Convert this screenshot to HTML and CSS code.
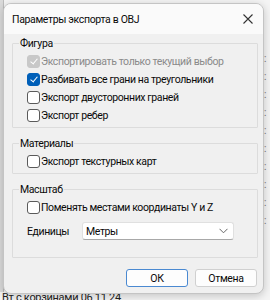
FILE: index.html
```html
<!DOCTYPE html>
<html lang="ru">
<head>
    <meta charset="UTF-8">
    <meta name="viewport" content="width=device-width, initial-scale=1.0">
    <title>Параметры экспорта в OBJ</title>
    <link rel="stylesheet" href="styles.css">
</head>

<body>
    <div class="desktop">
        <div class="back-left"></div>
        <div class="back-right">
            <span>:</span><span>:</span><span>:</span><span>:</span><span>:</span><span>:</span><span>:</span><span>:</span><span>:</span><span>:</span>
        </div>
        <div class="back-bottom">Вт с корзинами 06 11 24</div>
    </div>

    <div class="dialog">
        <div class="title-bar">
            <span class="title">Параметры экспорта в OBJ</span>
            <svg class="close" width="10" height="10" viewBox="0 0 10 10">
                <path d="M0.5 0.5 L9.5 9.5 M9.5 0.5 L0.5 9.5" stroke="#333" stroke-width="1.1" fill="none"/>
            </svg>
        </div>

        <div class="dialog-body">
            <fieldset class="group">
                <legend>Фигура</legend>
                <label class="check disabled"><span class="box on"></span>Экспортировать только текущий выбор</label>
                <label class="check"><span class="box on"></span>Разбивать все грани на треугольники</label>
                <label class="check"><span class="box"></span>Экспорт двусторонних граней</label>
                <label class="check"><span class="box"></span>Экспорт ребер</label>
            </fieldset>

            <fieldset class="group">
                <legend>Материалы</legend>
                <label class="check"><span class="box"></span>Экспорт текстурных карт</label>
            </fieldset>

            <fieldset class="group scale">
                <legend>Масштаб</legend>
                <label class="check"><span class="box"></span>Поменять местами координаты Y и Z</label>
                <div class="units">
                    <span class="units-label">Единицы</span>
                    <div class="select">
                        <span>Метры</span>
                        <svg width="9" height="6" viewBox="0 0 9 6">
                            <path d="M0.5 0.8 L4.5 4.8 L8.5 0.8" stroke="#666" stroke-width="1" fill="none"/>
                        </svg>
                    </div>
                </div>
            </fieldset>

            <div class="buttons">
                <button class="button default">ОК</button>
                <button class="button">Отмена</button>
            </div>
        </div>
    </div>
</body>
</html>
```

FILE: styles.css
```css
body {
    font-family: Roboto, "Liberation Sans", sans-serif;
    font-size: 10.5px;
    letter-spacing: -0.4px;
    color: #0a0a0a;
    background-color: #f4f4f4;
    margin: 0;
    padding: 0;
    width: 270px;
    height: 300px;
    overflow: hidden;
    position: relative;
}

.desktop {
    position: absolute;
    inset: 0;
}

.back-left {
    position: absolute;
    left: 0;
    top: 0;
    width: 3px;
    height: 292px;
    background: #dadada;
    border-right: 1px solid #bdbdbd;
}

.back-right {
    position: absolute;
    right: 0;
    top: 52px;
    width: 6px;
    display: flex;
    flex-direction: column;
    gap: 5px;
    color: #777;
    font-size: 10px;
    line-height: 13px;
}

.back-bottom {
    position: absolute;
    left: 2px;
    top: 291px;
    font-size: 11px;
    letter-spacing: -0.3px;
    color: #222;
    white-space: nowrap;
}

.dialog {
    position: absolute;
    left: 3px;
    top: 3px;
    width: 259px;
    height: 289px;
    background: #f0f0f0;
    border: 1px solid #c4c4c4;
    border-radius: 8px;
    box-shadow: 0 2px 8px rgba(0, 0, 0, 0.2);
    overflow: hidden;
    display: flex;
    flex-direction: column;
}

.title-bar {
    height: 30px;
    background: #fafafa;
    display: flex;
    align-items: center;
    justify-content: space-between;
    padding: 0 10px 0 8px;
    flex-shrink: 0;
}

.title {
    letter-spacing: -0.35px;
}

.dialog-body {
    padding: 2px 5px 0 8px;
    display: flex;
    flex-direction: column;
    gap: 8px;
}

.group {
    margin: 0;
    border: 1px solid #dcdcdc;
    border-radius: 1px;
    padding: 4px 6px 5px 14px;
    display: flex;
    flex-direction: column;
    gap: 5px;
}

.group legend {
    padding: 0 1px;
    margin-left: -8px;
    line-height: 15px;
}

.check {
    display: flex;
    align-items: center;
    height: 13px;
    white-space: nowrap;
}

.check.disabled {
    color: #8a8a8a;
}

.box {
    width: 11px;
    height: 11px;
    border: 1px solid #5a5a5a;
    border-radius: 3px;
    background: #ffffff;
    margin-right: 1px;
    flex-shrink: 0;
    position: relative;
}

.box.on {
    background: #005fb8;
    border-color: #005fb8;
}

.box.on::after {
    content: "";
    position: absolute;
    left: 3.5px;
    top: 1px;
    width: 3px;
    height: 6px;
    border-right: 1.3px solid #ffffff;
    border-bottom: 1.3px solid #ffffff;
    transform: rotate(40deg);
}

.disabled .box {
    background: #c8c8c8;
    border-color: #c8c8c8;
}

.scale {
    padding-bottom: 17px;
}

.units {
    display: flex;
    align-items: center;
    margin-top: 3px;
}

.units-label {
    width: 55px;
}

.select {
    width: 142px;
    height: 16px;
    background: #ffffff;
    border: 1px solid #e0e0e0;
    border-bottom-color: #a8a8a8;
    border-radius: 3px;
    display: flex;
    align-items: center;
    justify-content: space-between;
    padding: 0 5px 0 3px;
}

.buttons {
    display: flex;
    justify-content: flex-end;
    gap: 7px;
    margin-top: 3px;
    padding-right: 1px;
}

.button {
    width: 62px;
    height: 18px;
    font-family: Roboto, "Liberation Sans", sans-serif;
    font-size: 10.5px;
    letter-spacing: -0.35px;
    color: #0a0a0a;
    background: #fdfdfd;
    border: 1px solid #d0d0d0;
    border-radius: 3px;
    padding: 0;
    line-height: 15px;
}

.button.default {
    border-color: #4a89d1;
}
```
